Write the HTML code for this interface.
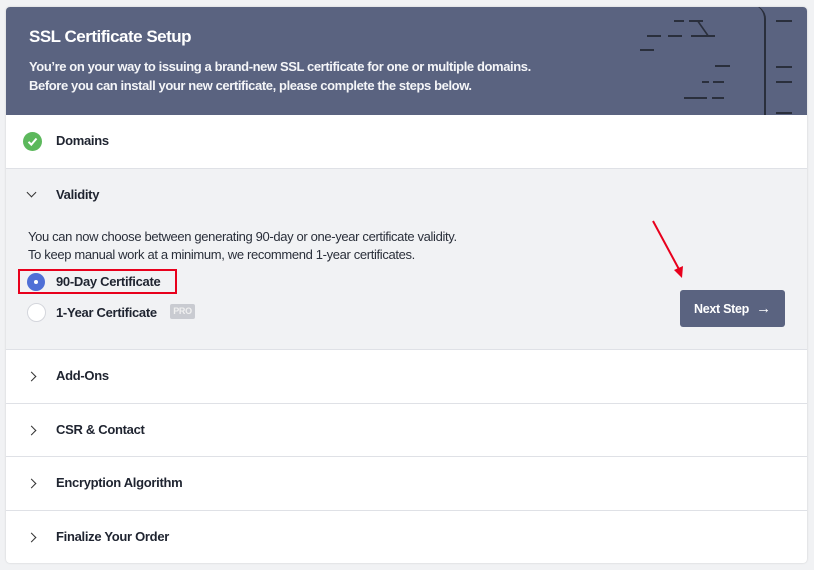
<!DOCTYPE html>
<html><head><style>
*{margin:0;padding:0;box-sizing:border-box}
body{width:814px;height:570px;background:#f1f2f4;font-family:"Liberation Sans",sans-serif;position:relative;overflow:hidden;color:#1f2430}
.card{position:absolute;left:6px;top:7px;width:801px;height:556px;background:#fff;border-radius:4px;overflow:hidden;box-shadow:0 0 2px rgba(0,0,0,.15)}
.hdr{position:absolute;left:0;top:0;width:801px;height:108px;background:#5a6380;color:#fff}
.hdr h1{position:absolute;left:23px;top:20px;font-size:17px;font-weight:bold;letter-spacing:-0.5px}
.hdr p{position:absolute;left:23px;top:50px;font-size:13px;line-height:19px;letter-spacing:-0.4px;font-weight:bold;color:#f4f5f8}
.l{position:absolute;background:#2a2f3c;height:2px}
.row{position:absolute;left:0;width:801px;border-top:1px solid #dfe1e6;font-size:13px;font-weight:bold;letter-spacing:-0.3px}
.row .t{position:absolute;left:50px}
.chev{position:absolute;left:22px;width:7px;height:7px;border-right:1.5px solid #333;border-bottom:1.5px solid #333}
</style></head><body>
<div class="card">
<div class="hdr">
<h1>SSL Certificate Setup</h1>
<p>You’re on your way to issuing a brand-new SSL certificate for one or multiple domains.<br>Before you can install your new certificate, please complete the steps below.</p>
</div>
</div>
<div style="position:absolute;left:751px;top:7px;width:50px;height:108px;overflow:hidden">
<div style="position:absolute;left:0;top:-2px;width:15px;height:112px;border-right:2px solid #2a2f3c;border-top-right-radius:14px"></div>
<div class="l" style="left:25px;top:13px;width:16px"></div>
<div class="l" style="left:25px;top:59px;width:16px"></div>
<div class="l" style="left:25px;top:74px;width:16px"></div>
<div class="l" style="left:25px;top:105px;width:16px"></div>
</div>
<div style="position:absolute;left:640px;top:7px;width:110px;height:108px">
<div class="l" style="left:0;top:42px;width:14px"></div>
<div class="l" style="left:7px;top:28px;width:14px"></div>
<div class="l" style="left:28px;top:28px;width:14px"></div>
<div class="l" style="left:51px;top:28px;width:24px"></div>
<div class="l" style="left:34px;top:13px;width:10px"></div>
<div class="l" style="left:49px;top:13px;width:14px"></div>
<div style="position:absolute;left:62px;top:14px;width:2px;height:15px;background:#2a2f3c;transform:skewX(35deg)"></div>
<div class="l" style="left:75px;top:58px;width:15px"></div>
<div class="l" style="left:62px;top:74px;width:7px"></div>
<div class="l" style="left:73px;top:74px;width:11px"></div>
<div class="l" style="left:44px;top:90px;width:23px"></div>
<div class="l" style="left:72px;top:90px;width:12px"></div>
</div>
<div style="position:absolute;left:6px;top:115px;width:801px;height:448px">
<div class="row" style="top:0;height:53px;border-top:none">
<div style="position:absolute;left:17px;top:17px;width:19px;height:19px;border-radius:50%;background:#5cb85c"></div>
<svg style="position:absolute;left:17px;top:17px" width="19" height="19"><path d="M5.5 9.8 L8.3 12.6 L13.5 6.5" stroke="#fff" stroke-width="2" fill="none"/></svg>
<span class="t" style="top:18px">Domains</span></div>
<div class="row" style="top:53px;height:181px;background:#f1f2f4">
<div class="chev" style="top:20px;transform:rotate(45deg)"></div>
<span class="t" style="top:18px">Validity</span>
<div style="position:absolute;left:22px;top:59px;font-weight:normal;font-size:13px;line-height:18px;letter-spacing:-0.35px;color:#2a2f3a">You can now choose between generating 90-day or one-year certificate validity.<br>To keep manual work at a minimum, we recommend 1-year certificates.</div>
<div style="position:absolute;left:12px;top:100px;width:159px;height:25px;border:2px solid #e8001c"></div>
<div style="position:absolute;left:21px;top:104px;width:18px;height:18px;border-radius:50%;background:#4f6fd6"></div>
<div style="position:absolute;left:28px;top:111px;width:4px;height:4px;border-radius:50%;background:#fff"></div>
<span style="position:absolute;left:50px;top:105px">90-Day Certificate</span>
<div style="position:absolute;left:21px;top:134px;width:19px;height:19px;border-radius:50%;background:#fff;border:1px solid #d4d6dc"></div>
<span style="position:absolute;left:50px;top:136px">1-Year Certificate</span>
<div style="position:absolute;left:164px;top:135px;width:25px;height:15px;background:#c9cbd1;color:#f0f0f0;font-size:9px;text-align:center;line-height:15px;border-radius:2px">PRO</div>
<div style="position:absolute;left:674px;top:121px;width:105px;height:37px;background:#5a6380;border-radius:3px;color:#fff;font-weight:bold;font-size:12.5px;line-height:37px;padding-left:14px">Next Step <span style="font-size:15px;margin-left:4px">→</span></div>
</div>
<div class="row" style="top:234px;height:54px"><div class="chev" style="top:23px;transform:rotate(-45deg)"></div><span class="t" style="top:18px">Add-Ons</span></div>
<div class="row" style="top:288px;height:53px"><div class="chev" style="top:23px;transform:rotate(-45deg)"></div><span class="t" style="top:18px">CSR &amp; Contact</span></div>
<div class="row" style="top:341px;height:54px"><div class="chev" style="top:23px;transform:rotate(-45deg)"></div><span class="t" style="top:18px">Encryption Algorithm</span></div>
<div class="row" style="top:395px;height:53px"><div class="chev" style="top:23px;transform:rotate(-45deg)"></div><span class="t" style="top:18px">Finalize Your Order</span></div>
</div>
<svg style="position:absolute;left:645px;top:215px" width="45" height="70"><path d="M8 6 L36 58" stroke="#e8001c" stroke-width="2"/><path d="M29 55 L37 63 L38 51 Z" fill="#e8001c"/></svg>
</body></html>
